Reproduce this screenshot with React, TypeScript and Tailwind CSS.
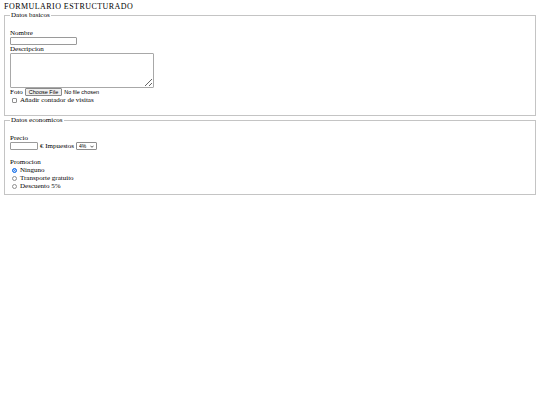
import { FC, ReactNode } from "react";

/* FIELDSET WRAPPER */

interface GroupProps {
  title: string;
  children: ReactNode;
  className?: string;
}

const Group: FC<GroupProps> = ({ title, children, className = "" }) => {
  return (
    <fieldset className={`border border-[#c4c4c4] px-[5px] ${className}`}>
      <legend className="px-[1px]">{title}</legend>
      {children}
    </fieldset>
  );
};

/* RADIO ROW */

const Option: FC<{ label: string; checked?: boolean }> = ({ label, checked }) => {
  return (
    <label className="flex items-center h-[8px]">
      <input
        type="radio"
        name="promocion"
        defaultChecked={checked}
        className="appearance-none w-[5px] h-[5px] ml-[2px] mr-[3px] rounded-full border border-[#8f8f8f] checked:border-[#1a73e8] checked:bg-[#1a73e8] checked:shadow-[inset_0_0_0_1px_#cfe0fb]"
      />
      {label}
    </label>
  );
};

const App: FC = () => {
  return (
    <div className="min-h-[405px] bg-white text-black font-['Liberation_Serif',serif] text-[7px] leading-[8px] px-[4px] pt-[3px]">
      <p className="text-[8px] tracking-[0.45px]">FORMULARIO ESTRUCTURADO</p>
      <form>
        {/* Datos basicos */}
        <Group title="Datos basicos" className="pb-[11px]">
          <div className="mt-[10px]">Nombre</div>
          <input
            type="text"
            className="block w-[67px] h-[8px] border border-[#9a9a9a] rounded-[1px]"
          />
          <div>Descripcion</div>
          <textarea className="block w-[144px] h-[35px] border border-[#a8a8a8] rounded-[1px]" />
          <div className="flex items-center h-[8px]">
            <span className="mr-[2px]">Foto</span>
            <input
              type="file"
              className="font-['Liberation_Sans',sans-serif] text-[5.5px] leading-[6px] file:font-['Liberation_Sans',sans-serif] file:text-[5.5px] file:leading-[5px] file:px-[3px] file:py-[0.5px] file:mr-[2px] file:border file:border-[#8a8a8a] file:rounded-[1px] file:bg-[#efefef]"
            />
          </div>
          <label className="flex items-center h-[8px]">
            <input
              type="checkbox"
              className="appearance-none w-[5px] h-[5px] ml-[2px] mr-[3px] border border-[#8f8f8f] rounded-[1px]"
            />
            Añadir contador de visitas
          </label>
        </Group>

        {/* Datos economicos */}
        <Group title="Datos economicos" className="pb-[4px]">
          <div className="mt-[10px]">Precio</div>
          <div className="flex items-center h-[8px]">
            <input
              type="text"
              className="w-[28px] h-[8px] border border-[#9a9a9a] rounded-[1px]"
            />
            <span className="ml-[2px] mr-[2px]">€ Impuestos</span>
            <div className="relative">
              <select className="appearance-none w-[21px] h-[8px] border border-[#8d8d8d] rounded-[1px] pl-[2px] font-['Liberation_Sans',sans-serif] text-[5px] leading-[6px]">
                <option>4%</option>
                <option>10%</option>
                <option>21%</option>
              </select>
              <svg
                viewBox="0 0 10 6"
                className="pointer-events-none absolute right-[3px] top-[3px] w-[4px] h-[3px]"
              >
                <path d="M1 1l4 4 4-4" fill="none" stroke="#000" strokeWidth="1.6" />
              </svg>
            </div>
          </div>
          <div className="mt-[8px]">Promocion</div>
          <Option label="Ninguno" checked />
          <Option label="Transporte gratuito" />
          <Option label="Descuento 5%" />
        </Group>
      </form>
    </div>
  );
};

export default App;
